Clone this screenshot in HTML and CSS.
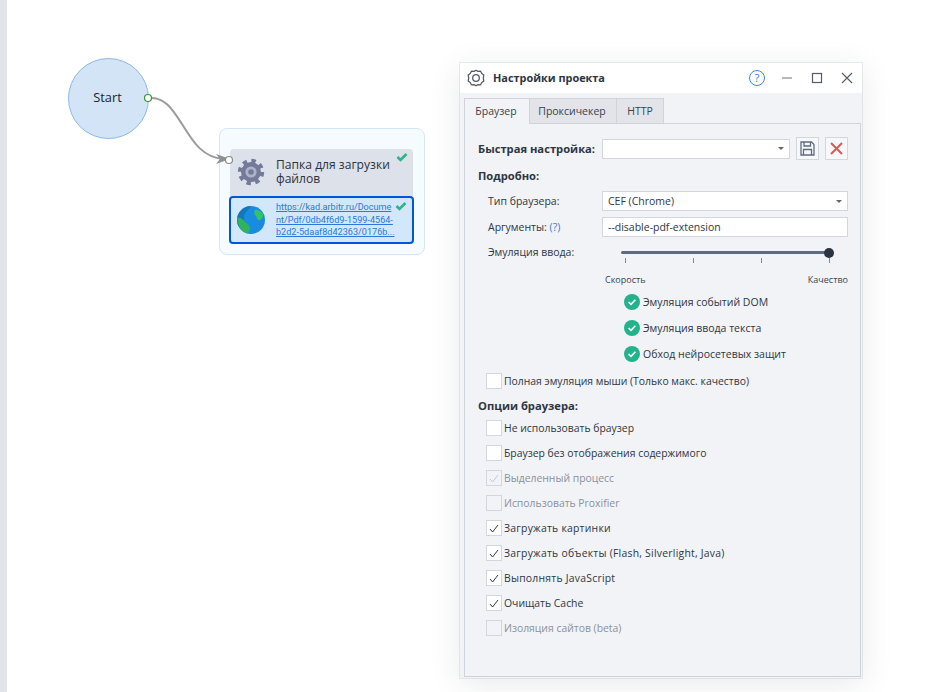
FILE: index.html
```html
<!DOCTYPE html>
<html lang="ru">
<head>
<meta charset="utf-8">
<title>Настройки проекта</title>
<link rel="stylesheet" href="styles.css">
</head>
<body>
<div class="canvas">
  <aside class="strip"></aside>
  <div class="stage">
    <div class="start">Start</div>
    <svg class="wire" width="120" height="90" viewBox="0 0 120 90">
      <path d="M12 8 C26 8 34 22 42 34 C52 50 62 68 84 69" fill="none" stroke="#9c9c9c" stroke-width="2"/>
      <path d="M76 64 L90 69 L76 74 L80 69 Z" fill="#8f8f8f"/>
      <circle cx="8" cy="8" r="3.5" fill="#fff" stroke="#2f9a35" stroke-width="1.2"/>
      <circle cx="89" cy="70" r="3.5" fill="#fff" stroke="#8c8c8c" stroke-width="1.2"/>
    </svg>
    <div class="group">
      <div class="node-head">
        <svg class="node-icon" width="28" height="28" viewBox="0 0 28 28">
          <circle cx="14" cy="14" r="11.2" fill="none" stroke="#747b9a" stroke-width="4" stroke-dasharray="4.4 4.4"/>
          <circle cx="14" cy="14" r="10" fill="#747b9a"/>
          <circle cx="14" cy="14" r="5.6" fill="#aeb3c7"/>
          <circle cx="14" cy="14" r="2.8" fill="#747b9a"/>
        </svg>
        <div class="node-title">Папка для загрузки файлов</div>
        <svg class="tick" width="12" height="10" viewBox="0 0 12 10"><path d="M1.5 5 L4.5 8 L10.5 2" fill="none" stroke="#2cb58a" stroke-width="2.6"/></svg>
      </div>
      <div class="node-item">
        <svg class="node-icon" width="28" height="28" viewBox="0 0 28 28">
          <circle cx="14" cy="14" r="14" fill="#178ce0"/>
          <path d="M14 0 A14 14 0 0 0 2 21 C6 19 8 15 7 10 C8 6 12 3 14 0 Z" fill="#1576b8"/>
          <path d="M0.5 12 C3 11 6 13 8 16 C11 18 14 21 13 24 C12 26 11 27.5 10 27.4 C4 25 0 19 0.5 12 Z" fill="#2fb45c"/>
          <path d="M18 4 C20 3 24 5 26 8 C27 11 24 15 21 14 C19 12 20 10 18 9 C17 7 17 5 18 4 Z" fill="#31c26a"/>
        </svg>
        <a class="node-link" href="#">https://kad.arbitr.ru/Docume<br>nt/Pdf/0db4f6d9-1599-4564-<br>b2d2-5daaf8d42363/0176b...</a>
        <svg class="tick" width="12" height="10" viewBox="0 0 12 10"><path d="M1.5 5 L4.5 8 L10.5 2" fill="none" stroke="#2cb58a" stroke-width="2.6"/></svg>
      </div>
    </div>
    <section class="window">
      <header class="titlebar">
        <svg class="win-gear" width="18" height="18" viewBox="0 0 18 18">
          <path d="M9 1.2 L11 2.4 L13.6 2.2 L14.8 4.5 L16.8 6 L16.3 9 L16.8 12 L14.8 13.5 L13.6 15.8 L11 15.6 L9 16.8 L7 15.6 L4.4 15.8 L3.2 13.5 L1.2 12 L1.7 9 L1.2 6 L3.2 4.5 L4.4 2.2 L7 2.4 Z" fill="none" stroke="#555b66" stroke-width="1.3" stroke-linejoin="round"/>
          <circle cx="9" cy="9" r="3.3" fill="none" stroke="#555b66" stroke-width="1.3"/>
        </svg>
        <h1 class="win-title">Настройки проекта</h1>
        <div class="win-controls">
          <span class="help">?</span>
          <svg width="12" height="12" viewBox="0 0 12 12"><path d="M1 6 H11" stroke="#8d939c" stroke-width="1.3"/></svg>
          <svg width="12" height="12" viewBox="0 0 12 12"><rect x="1.5" y="1.5" width="9" height="9" fill="none" stroke="#555b66" stroke-width="1.2"/></svg>
          <svg width="12" height="12" viewBox="0 0 12 12"><path d="M1 1 L11 11 M11 1 L1 11" stroke="#555b66" stroke-width="1.1"/></svg>
        </div>
      </header>
      <nav class="tabs">
        <div class="tab active">Браузер</div>
        <div class="tab t2">Проксичекер</div>
        <div class="tab t3">HTTP</div>
      </nav>
      <div class="panel">
        <div class="row quick">
          <b class="lbl-bold">Быстрая настройка:</b>
          <div class="combo quick-combo"><span></span><i class="caret"></i></div>
          <button class="icon-btn" type="button" aria-label="save">
            <svg width="15" height="15" viewBox="0 0 15 15"><path d="M1 1 H11.5 L14 3.5 V14 H1 Z" fill="none" stroke="#5f6b80" stroke-width="1.3"/><path d="M4 1 V5 H10.5 V1 M3.5 14 V8.5 H11.5 V14" fill="none" stroke="#5f6b80" stroke-width="1.3"/></svg>
          </button>
          <button class="icon-btn" type="button" aria-label="delete">
            <svg width="13" height="13" viewBox="0 0 13 13"><path d="M1 1 L12 12 M12 1 L1 12" stroke="#e4545a" stroke-width="2"/></svg>
          </button>
        </div>
        <b class="heading h-detail">Подробно:</b>
        <div class="row field f-type">
          <span class="field-label">Тип браузера:</span>
          <div class="combo wide"><span>CEF (Chrome)</span><i class="caret"></i></div>
        </div>
        <div class="row field f-args">
          <span class="field-label">Аргументы: <em class="q">(?)</em></span>
          <div class="combo wide"><span>--disable-pdf-extension</span></div>
        </div>
        <div class="row slider-row">
          <span class="field-label">Эмуляция ввода:</span>
          <div class="slider">
            <div class="track"><span class="thumb"></span></div>
            <div class="ticks"><i></i><i></i><i></i><i></i></div>
          </div>
        </div>
        <div class="scale"><span>Скорость</span><span>Качество</span></div>
        <ul class="feats">
          <li><svg width="16" height="16" viewBox="0 0 16 16"><circle cx="8" cy="8" r="8" fill="#22b28c"/><path d="M4.6 8.2 L7 10.4 L11.4 5.8" fill="none" stroke="#fff" stroke-width="1.6"/></svg>Эмуляция событий DOM</li>
          <li><svg width="16" height="16" viewBox="0 0 16 16"><circle cx="8" cy="8" r="8" fill="#22b28c"/><path d="M4.6 8.2 L7 10.4 L11.4 5.8" fill="none" stroke="#fff" stroke-width="1.6"/></svg>Эмуляция ввода текста</li>
          <li><svg width="16" height="16" viewBox="0 0 16 16"><circle cx="8" cy="8" r="8" fill="#22b28c"/><path d="M4.6 8.2 L7 10.4 L11.4 5.8" fill="none" stroke="#fff" stroke-width="1.6"/></svg>Обход нейросетевых защит</li>
        </ul>
        <label class="check mouse"><span class="box"></span>Полная эмуляция мыши (Только макс. качество)</label>
        <b class="heading h-opts">Опции браузера:</b>
        <div class="checks">
          <label class="check"><span class="box"></span>Не использовать браузер</label>
          <label class="check"><span class="box"></span>Браузер без отображения содержимого</label>
          <label class="check off"><span class="box"><svg width="10" height="9" viewBox="0 0 10 9"><path d="M1 5 L3.6 8 L9 1" fill="none" stroke="#c3c7cf" stroke-width="1"/></svg></span>Выделенный процесс</label>
          <label class="check off"><span class="box"></span>Использовать Proxifier</label>
          <label class="check roomy"><span class="box"><svg width="10" height="9" viewBox="0 0 10 9"><path d="M1 5 L3.6 8 L9 1" fill="none" stroke="#333a45" stroke-width="1"/></svg></span>Загружать картинки</label>
          <label class="check roomy"><span class="box"><svg width="10" height="9" viewBox="0 0 10 9"><path d="M1 5 L3.6 8 L9 1" fill="none" stroke="#333a45" stroke-width="1"/></svg></span>Загружать объекты (Flash, Silverlight, Java)</label>
          <label class="check roomy"><span class="box"><svg width="10" height="9" viewBox="0 0 10 9"><path d="M1 5 L3.6 8 L9 1" fill="none" stroke="#333a45" stroke-width="1"/></svg></span>Выполнять JavaScript</label>
          <label class="check"><span class="box"><svg width="10" height="9" viewBox="0 0 10 9"><path d="M1 5 L3.6 8 L9 1" fill="none" stroke="#333a45" stroke-width="1"/></svg></span>Очищать Cache</label>
          <label class="check off"><span class="box"></span>Изоляция сайтов (beta)</label>
        </div>
      </div>
    </section>
  </div>
</div>
</body>
</html>
```

FILE: styles.css
```css
* { box-sizing: border-box; }
html, body { margin: 0; height: 100%; }
body {
  background: #fff;
  font-family: "Open Sans", "Noto Sans", "Liberation Sans", sans-serif;
  font-size: 10.5px;
  color: #2f3642;
  overflow: hidden;
}
.canvas { display: flex; width: 928px; height: 692px; }
.strip { width: 7px; background: #e2e4e9; flex: none; }
.stage { position: relative; flex: 1; background: #fff; }

/* diagram: offsets are relative to .stage, which starts at x=7 */
.start {
  position: absolute; left: 61px; top: 58px;
  width: 81px; height: 81px; border-radius: 50%;
  background: #d2e4f5; border: 1px solid #8cb9e6;
  display: flex; align-items: center; justify-content: center;
  font-size: 12.8px; color: #20252b;
  padding: 0 2px 4px 0;
}
.wire { position: absolute; left: 133px; top: 90px; z-index: 2; }
.group {
  position: absolute; left: 212px; top: 128px;
  width: 206px; height: 127px;
  background: #f5fbff; border: 1px solid #d3e7fa; border-radius: 8px;
  padding: 20px 10px 0 9px;
  display: flex; flex-direction: column;
}
.node-head {
  position: relative; margin-left: 1px; margin-right: 1px;
  height: 47px; background: #dce1ea; border-radius: 4px 4px 0 0;
  display: flex; align-items: center; padding: 0 0 1px 7px;
}
.node-icon { flex: none; }
.node-title {
  margin-left: 11px; width: 124px;
  font-size: 12.1px; line-height: 14px; color: #2c3240;
}
.tick { position: absolute; right: 5px; top: 3px; }
.node-item {
  position: relative;
  height: 48px; background: #d2e8fa;
  border: 2px solid #0055dd; border-radius: 4px;
  display: flex; align-items: center; padding-left: 6px;
}
.node-item .tick { right: 5px; top: 3px; }
.node-link {
  margin-left: 11px;
  font-family: "Roboto", "Open Sans", sans-serif;
  font-size: 9.1px; line-height: 12.5px;
  color: #2a78dc; text-decoration: underline;
  white-space: nowrap;
}

/* settings window */
.window {
  position: absolute; left: 453px; top: 63px;
  width: 402px; height: 615px;
  background: #f1f3f7;
  box-shadow: 0 6px 30px rgba(40, 50, 70, .10), 0 0 0 1px #eceef1;
  display: flex; flex-direction: column;
  padding: 0 1px 1px 0;
}
.titlebar {
  height: 30px; background: #fff; flex: none;
  display: flex; align-items: center; padding: 0 9px 0 7px;
  margin-right: -1px;
}
.win-title { margin: 0 0 2px 8px; font-size: 10.9px; font-weight: 700; color: #2d3542; flex: 1; }
.win-controls { display: flex; align-items: center; gap: 18px; }
.help {
  width: 16px; height: 16px; border-radius: 50%; margin-right: -2px;
  border: 1px solid #3d87ee; color: #3d87ee;
  display: flex; align-items: center; justify-content: center;
  font-size: 11.5px; line-height: 1;
}
.tabs { display: flex; height: 30px; padding: 4px 0 0 4px; flex: none; align-items: flex-end; }
.tab {
  height: 25px; background: #e2e4e9; border: 1px solid #cfd4dc; border-bottom: 0;
  display: flex; align-items: center; justify-content: center;
  color: #3a414e; padding: 0 2px 1px 0;
}
.tab.active { width: 65px; height: 26px; background: #f1f3f7; position: relative; top: 1px; border-right: 0; z-index: 1; }
.t2 { width: 88px; }
.t3 { width: 47px; border-left: 0; padding-right: 0; }
.panel {
  flex: 1; margin-left: 4px;
  border: 1px solid #cfd4dc;
  padding: 13px 13px 0 13px;
  display: flex; flex-direction: column;
}
.row { display: flex; align-items: center; }
.quick { height: 23px; }
.lbl-bold { width: 124px; flex: none; }
b { font-weight: 700; font-size: 11.2px; color: #2f3642; }
.combo {
  height: 20px; background: #fff; border: 1px solid #d2d6dd;
  display: flex; align-items: center; justify-content: space-between;
  padding: 0 5px; color: #2f3642;
}
.quick-combo { width: 188px; flex: none; }
.caret {
  width: 0; height: 0; border-left: 3px solid transparent; border-right: 3px solid transparent;
  border-top: 3px solid #5f6670;
}
.icon-btn {
  width: 23px; height: 23px; padding: 0; flex: none; margin-left: 6px;
  background: #f7f8fa; border: 1px solid #d2d6dd;
  display: flex; align-items: center; justify-content: center;
}
.heading { display: block; height: 16px; line-height: 16px; }
.h-detail { margin-top: 8px; }
.field { height: 20px; padding-left: 10px; }
.f-type { margin-top: 7px; }
.f-args { margin-top: 6px; }
.field-label { width: 114px; flex: none; color: #2f3642; }
.wide { width: 246px; flex: none; }
.q { font-style: normal; color: #2e80d8; }
.slider-row { height: 16px; margin-top: 7px; padding-left: 10px; align-items: flex-start; }
.slider-row .field-label { line-height: 16px; }
.slider { margin-left: 19px; width: 210px; padding-top: 7px; }
.track { position: relative; height: 3px; width: 209px; background: #5f6b80; border-radius: 2px; }
.thumb {
  position: absolute; right: -4px; top: -3.5px;
  width: 10px; height: 10px; border-radius: 50%; background: #2b3440;
}
.ticks { display: flex; justify-content: space-between; width: 205px; margin: 4px 0 0 4px; }
.ticks i { width: 1px; height: 5px; background: #7e8a9c; }
.scale {
  display: flex; justify-content: space-between;
  margin: 12px 0 0 114px; width: 256px;
  height: 16px; line-height: 16px; font-size: 9px; color: #3a4250;
  padding-left: 13px;
}
.feats { list-style: none; margin: 6px 0 0 0; padding: 0 0 0 146px; display: flex; flex-direction: column; gap: 10px; }
.feats li { display: flex; align-items: center; gap: 3px; height: 16px; }
.check { display: flex; align-items: center; height: 16px; gap: 2px; color: #2f3642; padding-left: 8px; font-size: 10.4px; }
.roomy { letter-spacing: .24px; }
.box {
  width: 16px; height: 16px; flex: none; background: #fff; border: 1px solid #d2d6dd;
  display: flex; align-items: center; justify-content: center;
}
.mouse { margin-top: 11px; }
.h-opts { margin-top: 9px; }
.checks { display: flex; flex-direction: column; gap: 9px; margin-top: 6px; }
.off { color: #8b919c; }
.off .box { background: #f1f3f7; }
```
